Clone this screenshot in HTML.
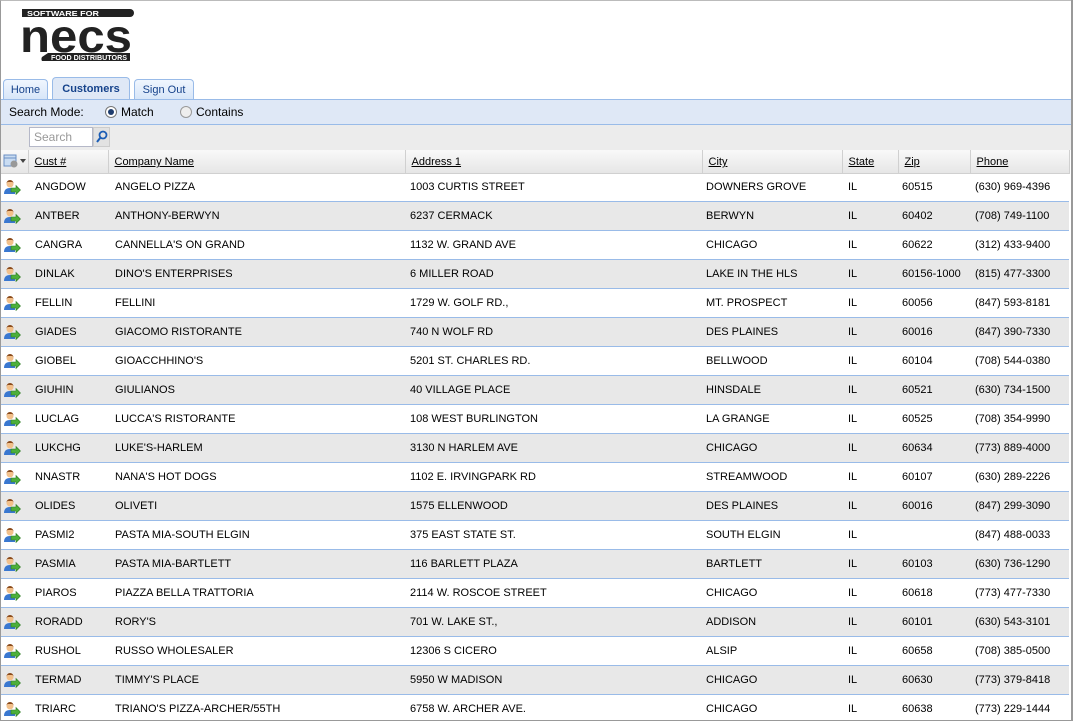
<!DOCTYPE html>
<html><head><meta charset="utf-8">
<style>
*{margin:0;padding:0;box-sizing:border-box}
body{width:1073px;height:721px;overflow:hidden;background:#fff;font-family:"Liberation Sans",Arial,sans-serif;font-size:11px;color:#000;position:relative}
.frame{position:absolute;left:0;top:0;width:1073px;height:721px;border:1px solid #999;border-top:1px solid #bbb}
.logo{position:absolute;left:18px;top:6px}
.tab{position:absolute;border:1px solid #99bbe8;border-bottom:none;border-radius:4px 4px 0 0;background:linear-gradient(#f0f6fe,#d6e5f8);color:#15428b;font-size:11px;text-align:center}
.bar{position:absolute;left:1px;width:1070px}
table{border-collapse:collapse;position:absolute;left:1px;top:150px;width:1068px;table-layout:fixed}
th{height:23px;background:linear-gradient(#f9f9f9,#e6e6e6);border-right:1px solid #d0d0d0;border-bottom:1px solid #d0d0d0;font-weight:normal;text-align:left;padding-left:6px;padding-top:2px;text-decoration:underline;color:#000}
.r{position:absolute;left:1px;width:1068px;height:29px;border-bottom:1px solid #99bbe8;line-height:28px}
.r.a{background:#e8e8e8}
.r span{position:absolute;white-space:nowrap}
.pi{position:absolute;left:2px;top:6px;width:18px;height:16px}
</style></head><body>
<div class="frame"></div>
<svg class="logo" width="118" height="58" viewBox="0 0 118 58">
<path d="M4 3h108a4 4 0 0 1 0 8H4z" fill="#222"/>
<text x="9" y="10" font-family="Liberation Sans" font-weight="bold" font-size="7.5" fill="#fff" textLength="72" lengthAdjust="spacingAndGlyphs">SOFTWARE FOR</text>
<text x="2" y="46" font-family="Liberation Sans" font-weight="bold" font-size="46" fill="#222" textLength="112" lengthAdjust="spacingAndGlyphs">necs</text>
<path d="M30 47h82v8H24a4 4 0 0 1 0-4z" fill="#222"/>
<text x="33" y="54" font-family="Liberation Sans" font-weight="bold" font-size="7" fill="#fff" textLength="76" lengthAdjust="spacingAndGlyphs">FOOD DISTRIBUTORS</text>
</svg>
<div class="tab" style="left:3px;top:79px;width:45px;height:21px;line-height:20px">Home</div>
<div class="tab" style="left:52px;top:77px;width:78px;height:23px;line-height:22px;background:#dfe8f6;font-weight:bold;color:#15428b">Customers</div>
<div class="tab" style="left:134px;top:79px;width:60px;height:21px;line-height:20px">Sign Out</div>
<div class="bar" style="top:99px;height:26px;background:#dfe8f6;border-top:1px solid #99bbe8;border-bottom:1px solid #99bbe8;font-size:12px;line-height:24px">
<span style="position:absolute;left:8px">Search Mode:</span>
<span style="position:absolute;left:104px;top:6px;width:12px;height:12px;border-radius:50%;border:1px solid #777;background:#fff"><span style="position:absolute;left:2px;top:2px;width:6px;height:6px;border-radius:50%;background:#1e3c6e"></span></span>
<span style="position:absolute;left:120px">Match</span>
<span style="position:absolute;left:179px;top:6px;width:12px;height:12px;border-radius:50%;border:1px solid #999;background:#eee"></span>
<span style="position:absolute;left:195px">Contains</span>
</div>
<div class="bar" style="top:125px;height:25px;background:#ececec">
<div style="position:absolute;left:28px;top:2px;width:64px;height:20px;border:1px solid #b5b8c8;background:#fff;color:#999;font-size:12px;line-height:18px;padding-left:4px">Search</div>
<div style="position:absolute;left:92px;top:2px;width:17px;height:20px;background:#e2e2e2;border:1px solid #ccc"><svg width="15" height="18"><circle cx="9" cy="7" r="3.5" fill="none" stroke="#1b5db5" stroke-width="1.8"/><line x1="6.5" y1="9.5" x2="3" y2="14" stroke="#1b5db5" stroke-width="2"/></svg></div>
</div>
<table>
<colgroup><col style="width:27px"><col style="width:80px"><col style="width:297px"><col style="width:297px"><col style="width:140px"><col style="width:56px"><col style="width:72px"><col style="width:99px"></colgroup>
<tr><th style="padding-left:2px;text-decoration:none"><svg width="24" height="16"><rect x="1" y="2" width="12" height="11" fill="#c9dcf2" stroke="#6a8fc4"/><line x1="1" y1="5" x2="13" y2="5" stroke="#6a8fc4"/><circle cx="11" cy="11" r="3.5" fill="#999"/><path d="M17 6h6l-3 4z" fill="#444"/></svg></th><th>Cust #</th><th>Company Name</th><th>Address 1</th><th>City</th><th>State</th><th>Zip</th><th>Phone</th></tr>
</table>
<div>
<div class="r" style="top:173px"><svg class="pi" viewBox="0 0 18 16"><circle cx="7" cy="5" r="3.5" fill="#f2c08a"/><path d="M3.5 4.5a3.5 3.5 0 0 1 7 0l-1-1.5h-5z" fill="#8a4a1a"/><path d="M1 15c0-4 2-6 6-6s5 2 5 4v2z" fill="#3a78d0"/><path d="M8 9h5V6.5l4.5 4.5-4.5 4.5V13H8z" fill="#4caf3a" stroke="#2d7a22" stroke-width=".6"/></svg><span style="left:34px">ANGDOW</span><span style="left:114px">ANGELO PIZZA</span><span style="left:409px">1003 CURTIS STREET</span><span style="left:705px">DOWNERS GROVE</span><span style="left:847px">IL</span><span style="left:901px">60515</span><span style="left:974px">(630) 969-4396</span></div>
<div class="r a" style="top:202px"><svg class="pi" viewBox="0 0 18 16"><circle cx="7" cy="5" r="3.5" fill="#f2c08a"/><path d="M3.5 4.5a3.5 3.5 0 0 1 7 0l-1-1.5h-5z" fill="#8a4a1a"/><path d="M1 15c0-4 2-6 6-6s5 2 5 4v2z" fill="#3a78d0"/><path d="M8 9h5V6.5l4.5 4.5-4.5 4.5V13H8z" fill="#4caf3a" stroke="#2d7a22" stroke-width=".6"/></svg><span style="left:34px">ANTBER</span><span style="left:114px">ANTHONY-BERWYN</span><span style="left:409px">6237 CERMACK</span><span style="left:705px">BERWYN</span><span style="left:847px">IL</span><span style="left:901px">60402</span><span style="left:974px">(708) 749-1100</span></div>
<div class="r" style="top:231px"><svg class="pi" viewBox="0 0 18 16"><circle cx="7" cy="5" r="3.5" fill="#f2c08a"/><path d="M3.5 4.5a3.5 3.5 0 0 1 7 0l-1-1.5h-5z" fill="#8a4a1a"/><path d="M1 15c0-4 2-6 6-6s5 2 5 4v2z" fill="#3a78d0"/><path d="M8 9h5V6.5l4.5 4.5-4.5 4.5V13H8z" fill="#4caf3a" stroke="#2d7a22" stroke-width=".6"/></svg><span style="left:34px">CANGRA</span><span style="left:114px">CANNELLA'S ON GRAND</span><span style="left:409px">1132 W. GRAND AVE</span><span style="left:705px">CHICAGO</span><span style="left:847px">IL</span><span style="left:901px">60622</span><span style="left:974px">(312) 433-9400</span></div>
<div class="r a" style="top:260px"><svg class="pi" viewBox="0 0 18 16"><circle cx="7" cy="5" r="3.5" fill="#f2c08a"/><path d="M3.5 4.5a3.5 3.5 0 0 1 7 0l-1-1.5h-5z" fill="#8a4a1a"/><path d="M1 15c0-4 2-6 6-6s5 2 5 4v2z" fill="#3a78d0"/><path d="M8 9h5V6.5l4.5 4.5-4.5 4.5V13H8z" fill="#4caf3a" stroke="#2d7a22" stroke-width=".6"/></svg><span style="left:34px">DINLAK</span><span style="left:114px">DINO'S ENTERPRISES</span><span style="left:409px">6 MILLER ROAD</span><span style="left:705px">LAKE IN THE HLS</span><span style="left:847px">IL</span><span style="left:901px">60156-1000</span><span style="left:974px">(815) 477-3300</span></div>
<div class="r" style="top:289px"><svg class="pi" viewBox="0 0 18 16"><circle cx="7" cy="5" r="3.5" fill="#f2c08a"/><path d="M3.5 4.5a3.5 3.5 0 0 1 7 0l-1-1.5h-5z" fill="#8a4a1a"/><path d="M1 15c0-4 2-6 6-6s5 2 5 4v2z" fill="#3a78d0"/><path d="M8 9h5V6.5l4.5 4.5-4.5 4.5V13H8z" fill="#4caf3a" stroke="#2d7a22" stroke-width=".6"/></svg><span style="left:34px">FELLIN</span><span style="left:114px">FELLINI</span><span style="left:409px">1729 W. GOLF RD.,</span><span style="left:705px">MT. PROSPECT</span><span style="left:847px">IL</span><span style="left:901px">60056</span><span style="left:974px">(847) 593-8181</span></div>
<div class="r a" style="top:318px"><svg class="pi" viewBox="0 0 18 16"><circle cx="7" cy="5" r="3.5" fill="#f2c08a"/><path d="M3.5 4.5a3.5 3.5 0 0 1 7 0l-1-1.5h-5z" fill="#8a4a1a"/><path d="M1 15c0-4 2-6 6-6s5 2 5 4v2z" fill="#3a78d0"/><path d="M8 9h5V6.5l4.5 4.5-4.5 4.5V13H8z" fill="#4caf3a" stroke="#2d7a22" stroke-width=".6"/></svg><span style="left:34px">GIADES</span><span style="left:114px">GIACOMO RISTORANTE</span><span style="left:409px">740 N WOLF RD</span><span style="left:705px">DES PLAINES</span><span style="left:847px">IL</span><span style="left:901px">60016</span><span style="left:974px">(847) 390-7330</span></div>
<div class="r" style="top:347px"><svg class="pi" viewBox="0 0 18 16"><circle cx="7" cy="5" r="3.5" fill="#f2c08a"/><path d="M3.5 4.5a3.5 3.5 0 0 1 7 0l-1-1.5h-5z" fill="#8a4a1a"/><path d="M1 15c0-4 2-6 6-6s5 2 5 4v2z" fill="#3a78d0"/><path d="M8 9h5V6.5l4.5 4.5-4.5 4.5V13H8z" fill="#4caf3a" stroke="#2d7a22" stroke-width=".6"/></svg><span style="left:34px">GIOBEL</span><span style="left:114px">GIOACCHHINO'S</span><span style="left:409px">5201 ST. CHARLES RD.</span><span style="left:705px">BELLWOOD</span><span style="left:847px">IL</span><span style="left:901px">60104</span><span style="left:974px">(708) 544-0380</span></div>
<div class="r a" style="top:376px"><svg class="pi" viewBox="0 0 18 16"><circle cx="7" cy="5" r="3.5" fill="#f2c08a"/><path d="M3.5 4.5a3.5 3.5 0 0 1 7 0l-1-1.5h-5z" fill="#8a4a1a"/><path d="M1 15c0-4 2-6 6-6s5 2 5 4v2z" fill="#3a78d0"/><path d="M8 9h5V6.5l4.5 4.5-4.5 4.5V13H8z" fill="#4caf3a" stroke="#2d7a22" stroke-width=".6"/></svg><span style="left:34px">GIUHIN</span><span style="left:114px">GIULIANOS</span><span style="left:409px">40 VILLAGE PLACE</span><span style="left:705px">HINSDALE</span><span style="left:847px">IL</span><span style="left:901px">60521</span><span style="left:974px">(630) 734-1500</span></div>
<div class="r" style="top:405px"><svg class="pi" viewBox="0 0 18 16"><circle cx="7" cy="5" r="3.5" fill="#f2c08a"/><path d="M3.5 4.5a3.5 3.5 0 0 1 7 0l-1-1.5h-5z" fill="#8a4a1a"/><path d="M1 15c0-4 2-6 6-6s5 2 5 4v2z" fill="#3a78d0"/><path d="M8 9h5V6.5l4.5 4.5-4.5 4.5V13H8z" fill="#4caf3a" stroke="#2d7a22" stroke-width=".6"/></svg><span style="left:34px">LUCLAG</span><span style="left:114px">LUCCA'S RISTORANTE</span><span style="left:409px">108 WEST BURLINGTON</span><span style="left:705px">LA GRANGE</span><span style="left:847px">IL</span><span style="left:901px">60525</span><span style="left:974px">(708) 354-9990</span></div>
<div class="r a" style="top:434px"><svg class="pi" viewBox="0 0 18 16"><circle cx="7" cy="5" r="3.5" fill="#f2c08a"/><path d="M3.5 4.5a3.5 3.5 0 0 1 7 0l-1-1.5h-5z" fill="#8a4a1a"/><path d="M1 15c0-4 2-6 6-6s5 2 5 4v2z" fill="#3a78d0"/><path d="M8 9h5V6.5l4.5 4.5-4.5 4.5V13H8z" fill="#4caf3a" stroke="#2d7a22" stroke-width=".6"/></svg><span style="left:34px">LUKCHG</span><span style="left:114px">LUKE'S-HARLEM</span><span style="left:409px">3130 N HARLEM AVE</span><span style="left:705px">CHICAGO</span><span style="left:847px">IL</span><span style="left:901px">60634</span><span style="left:974px">(773) 889-4000</span></div>
<div class="r" style="top:463px"><svg class="pi" viewBox="0 0 18 16"><circle cx="7" cy="5" r="3.5" fill="#f2c08a"/><path d="M3.5 4.5a3.5 3.5 0 0 1 7 0l-1-1.5h-5z" fill="#8a4a1a"/><path d="M1 15c0-4 2-6 6-6s5 2 5 4v2z" fill="#3a78d0"/><path d="M8 9h5V6.5l4.5 4.5-4.5 4.5V13H8z" fill="#4caf3a" stroke="#2d7a22" stroke-width=".6"/></svg><span style="left:34px">NNASTR</span><span style="left:114px">NANA'S HOT DOGS</span><span style="left:409px">1102 E. IRVINGPARK RD</span><span style="left:705px">STREAMWOOD</span><span style="left:847px">IL</span><span style="left:901px">60107</span><span style="left:974px">(630) 289-2226</span></div>
<div class="r a" style="top:492px"><svg class="pi" viewBox="0 0 18 16"><circle cx="7" cy="5" r="3.5" fill="#f2c08a"/><path d="M3.5 4.5a3.5 3.5 0 0 1 7 0l-1-1.5h-5z" fill="#8a4a1a"/><path d="M1 15c0-4 2-6 6-6s5 2 5 4v2z" fill="#3a78d0"/><path d="M8 9h5V6.5l4.5 4.5-4.5 4.5V13H8z" fill="#4caf3a" stroke="#2d7a22" stroke-width=".6"/></svg><span style="left:34px">OLIDES</span><span style="left:114px">OLIVETI</span><span style="left:409px">1575 ELLENWOOD</span><span style="left:705px">DES PLAINES</span><span style="left:847px">IL</span><span style="left:901px">60016</span><span style="left:974px">(847) 299-3090</span></div>
<div class="r" style="top:521px"><svg class="pi" viewBox="0 0 18 16"><circle cx="7" cy="5" r="3.5" fill="#f2c08a"/><path d="M3.5 4.5a3.5 3.5 0 0 1 7 0l-1-1.5h-5z" fill="#8a4a1a"/><path d="M1 15c0-4 2-6 6-6s5 2 5 4v2z" fill="#3a78d0"/><path d="M8 9h5V6.5l4.5 4.5-4.5 4.5V13H8z" fill="#4caf3a" stroke="#2d7a22" stroke-width=".6"/></svg><span style="left:34px">PASMI2</span><span style="left:114px">PASTA MIA-SOUTH ELGIN</span><span style="left:409px">375 EAST STATE ST.</span><span style="left:705px">SOUTH ELGIN</span><span style="left:847px">IL</span><span style="left:974px">(847) 488-0033</span></div>
<div class="r a" style="top:550px"><svg class="pi" viewBox="0 0 18 16"><circle cx="7" cy="5" r="3.5" fill="#f2c08a"/><path d="M3.5 4.5a3.5 3.5 0 0 1 7 0l-1-1.5h-5z" fill="#8a4a1a"/><path d="M1 15c0-4 2-6 6-6s5 2 5 4v2z" fill="#3a78d0"/><path d="M8 9h5V6.5l4.5 4.5-4.5 4.5V13H8z" fill="#4caf3a" stroke="#2d7a22" stroke-width=".6"/></svg><span style="left:34px">PASMIA</span><span style="left:114px">PASTA MIA-BARTLETT</span><span style="left:409px">116 BARLETT PLAZA</span><span style="left:705px">BARTLETT</span><span style="left:847px">IL</span><span style="left:901px">60103</span><span style="left:974px">(630) 736-1290</span></div>
<div class="r" style="top:579px"><svg class="pi" viewBox="0 0 18 16"><circle cx="7" cy="5" r="3.5" fill="#f2c08a"/><path d="M3.5 4.5a3.5 3.5 0 0 1 7 0l-1-1.5h-5z" fill="#8a4a1a"/><path d="M1 15c0-4 2-6 6-6s5 2 5 4v2z" fill="#3a78d0"/><path d="M8 9h5V6.5l4.5 4.5-4.5 4.5V13H8z" fill="#4caf3a" stroke="#2d7a22" stroke-width=".6"/></svg><span style="left:34px">PIAROS</span><span style="left:114px">PIAZZA BELLA TRATTORIA</span><span style="left:409px">2114 W. ROSCOE STREET</span><span style="left:705px">CHICAGO</span><span style="left:847px">IL</span><span style="left:901px">60618</span><span style="left:974px">(773) 477-7330</span></div>
<div class="r a" style="top:608px"><svg class="pi" viewBox="0 0 18 16"><circle cx="7" cy="5" r="3.5" fill="#f2c08a"/><path d="M3.5 4.5a3.5 3.5 0 0 1 7 0l-1-1.5h-5z" fill="#8a4a1a"/><path d="M1 15c0-4 2-6 6-6s5 2 5 4v2z" fill="#3a78d0"/><path d="M8 9h5V6.5l4.5 4.5-4.5 4.5V13H8z" fill="#4caf3a" stroke="#2d7a22" stroke-width=".6"/></svg><span style="left:34px">RORADD</span><span style="left:114px">RORY'S</span><span style="left:409px">701 W. LAKE ST.,</span><span style="left:705px">ADDISON</span><span style="left:847px">IL</span><span style="left:901px">60101</span><span style="left:974px">(630) 543-3101</span></div>
<div class="r" style="top:637px"><svg class="pi" viewBox="0 0 18 16"><circle cx="7" cy="5" r="3.5" fill="#f2c08a"/><path d="M3.5 4.5a3.5 3.5 0 0 1 7 0l-1-1.5h-5z" fill="#8a4a1a"/><path d="M1 15c0-4 2-6 6-6s5 2 5 4v2z" fill="#3a78d0"/><path d="M8 9h5V6.5l4.5 4.5-4.5 4.5V13H8z" fill="#4caf3a" stroke="#2d7a22" stroke-width=".6"/></svg><span style="left:34px">RUSHOL</span><span style="left:114px">RUSSO WHOLESALER</span><span style="left:409px">12306 S CICERO</span><span style="left:705px">ALSIP</span><span style="left:847px">IL</span><span style="left:901px">60658</span><span style="left:974px">(708) 385-0500</span></div>
<div class="r a" style="top:666px"><svg class="pi" viewBox="0 0 18 16"><circle cx="7" cy="5" r="3.5" fill="#f2c08a"/><path d="M3.5 4.5a3.5 3.5 0 0 1 7 0l-1-1.5h-5z" fill="#8a4a1a"/><path d="M1 15c0-4 2-6 6-6s5 2 5 4v2z" fill="#3a78d0"/><path d="M8 9h5V6.5l4.5 4.5-4.5 4.5V13H8z" fill="#4caf3a" stroke="#2d7a22" stroke-width=".6"/></svg><span style="left:34px">TERMAD</span><span style="left:114px">TIMMY'S PLACE</span><span style="left:409px">5950 W MADISON</span><span style="left:705px">CHICAGO</span><span style="left:847px">IL</span><span style="left:901px">60630</span><span style="left:974px">(773) 379-8418</span></div>
<div class="r" style="top:695px;border-bottom:none"><svg class="pi" viewBox="0 0 18 16"><circle cx="7" cy="5" r="3.5" fill="#f2c08a"/><path d="M3.5 4.5a3.5 3.5 0 0 1 7 0l-1-1.5h-5z" fill="#8a4a1a"/><path d="M1 15c0-4 2-6 6-6s5 2 5 4v2z" fill="#3a78d0"/><path d="M8 9h5V6.5l4.5 4.5-4.5 4.5V13H8z" fill="#4caf3a" stroke="#2d7a22" stroke-width=".6"/></svg><span style="left:34px">TRIARC</span><span style="left:114px">TRIANO'S PIZZA-ARCHER/55TH</span><span style="left:409px">6758 W. ARCHER AVE.</span><span style="left:705px">CHICAGO</span><span style="left:847px">IL</span><span style="left:901px">60638</span><span style="left:974px">(773) 229-1444</span></div>
</div>
<div style="position:absolute;left:0;top:720px;width:1073px;height:1px;background:#999"></div>
<div style="position:absolute;left:1071px;top:0;width:2px;height:721px;background:#999"></div>
</body></html>
